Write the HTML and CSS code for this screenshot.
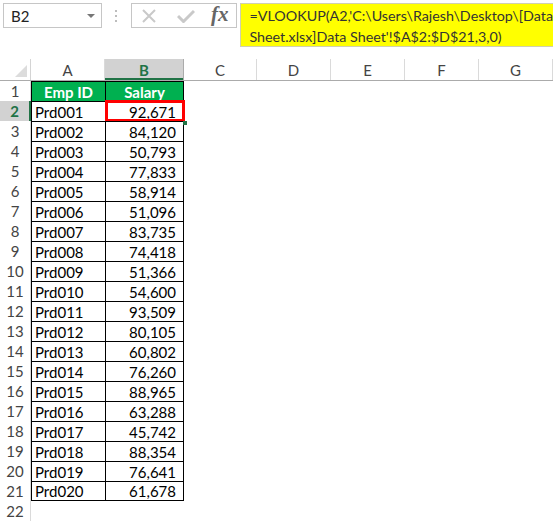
FILE: index.html
```html
<!DOCTYPE html>
<html>
<head>
<meta charset="utf-8">
<link rel="stylesheet" href="styles.css">
</head>
<body>
<div class="app">
  <div class="toolbar">
    <div class="namebox"><span class="ref">B2</span><span class="caret"></span></div>
    <div class="grip"><i></i><i></i><i></i></div>
    <div class="buttons">
      <svg class="icon-x" width="16" height="16" viewBox="0 0 16 16"><path d="M2 2 L14 14 M14 2 L2 14" stroke="#c9c9c9" stroke-width="2" fill="none"/></svg>
      <svg class="icon-check" width="18" height="14" viewBox="0 0 18 14"><path d="M1 7 L6.5 12.5 L17 2" stroke="#c9c9c9" stroke-width="3" fill="none"/></svg>
      <span class="fx">fx</span>
    </div>
    <div class="formula">=VLOOKUP(A2,'C:\Users\Rajesh\Desktop\[Data<br>Sheet.xlsx]Data Sheet'!$A$2:$D$21,3,0)</div>
  </div>
  <div class="sheet">
    <div class="row head">
      <div class="corner"></div>
      <div class="ch">A</div><div class="ch sel">B</div><div class="ch">C</div><div class="ch">D</div><div class="ch">E</div><div class="ch">F</div><div class="ch">G</div>
    </div>
    <div class="row"><div class="rh">1</div><div class="c t th">Emp ID</div><div class="c t th tb">Salary</div></div>
    <div class="row"><div class="rh sel">2</div><div class="c t">Prd001</div><div class="c t tb num active">92,671</div></div>
    <div class="row"><div class="rh">3</div><div class="c t">Prd002</div><div class="c t tb num">84,120</div></div>
    <div class="row"><div class="rh">4</div><div class="c t">Prd003</div><div class="c t tb num">50,793</div></div>
    <div class="row"><div class="rh">5</div><div class="c t">Prd004</div><div class="c t tb num">77,833</div></div>
    <div class="row"><div class="rh">6</div><div class="c t">Prd005</div><div class="c t tb num">58,914</div></div>
    <div class="row"><div class="rh">7</div><div class="c t">Prd006</div><div class="c t tb num">51,096</div></div>
    <div class="row"><div class="rh">8</div><div class="c t">Prd007</div><div class="c t tb num">83,735</div></div>
    <div class="row"><div class="rh">9</div><div class="c t">Prd008</div><div class="c t tb num">74,418</div></div>
    <div class="row"><div class="rh">10</div><div class="c t">Prd009</div><div class="c t tb num">51,366</div></div>
    <div class="row"><div class="rh">11</div><div class="c t">Prd010</div><div class="c t tb num">54,600</div></div>
    <div class="row"><div class="rh">12</div><div class="c t">Prd011</div><div class="c t tb num">93,509</div></div>
    <div class="row"><div class="rh">13</div><div class="c t">Prd012</div><div class="c t tb num">80,105</div></div>
    <div class="row"><div class="rh">14</div><div class="c t">Prd013</div><div class="c t tb num">60,802</div></div>
    <div class="row"><div class="rh">15</div><div class="c t">Prd014</div><div class="c t tb num">76,260</div></div>
    <div class="row"><div class="rh">16</div><div class="c t">Prd015</div><div class="c t tb num">88,965</div></div>
    <div class="row"><div class="rh">17</div><div class="c t">Prd016</div><div class="c t tb num">63,288</div></div>
    <div class="row"><div class="rh">18</div><div class="c t">Prd017</div><div class="c t tb num">45,742</div></div>
    <div class="row"><div class="rh">19</div><div class="c t">Prd018</div><div class="c t tb num">88,354</div></div>
    <div class="row"><div class="rh">20</div><div class="c t">Prd019</div><div class="c t tb num">76,641</div></div>
    <div class="row"><div class="rh">21</div><div class="c t last">Prd020</div><div class="c t tb num last">61,678</div></div>
    <div class="row"><div class="rh">22</div></div>
  </div>
</div>
</body>
</html>
```
FILE: styles.css
```css
html, body {
  margin: 0;
  padding: 0;
  background: #fff;
}
body {
  font-family: Lato, "Liberation Sans", sans-serif;
  color: #000;
  width: 553px;
  height: 521px;
  overflow: hidden;
}
.app {
  width: 553px;
  height: 521px;
  overflow: hidden;
}
.toolbar {
  display: flex;
  align-items: flex-start;
  height: 59px;
  padding-top: 3px;
  box-sizing: border-box;
}
.namebox {
  margin-left: 3px;
  width: 102px;
  height: 25px;
  box-sizing: border-box;
  border: 1px solid #c6c6c6;
  display: flex;
  align-items: center;
  justify-content: space-between;
  padding: 0 6px 0 7px;
}
.ref {
  font-size: 15px;
  color: #222;
}
.caret {
  width: 0;
  height: 0;
  border-left: 4px solid transparent;
  border-right: 4px solid transparent;
  border-top: 4px solid #777;
}
.grip {
  width: 30px;
  height: 25px;
  display: flex;
  flex-direction: column;
  align-items: center;
  justify-content: center;
  gap: 3px;
}
.grip i {
  display: block;
  width: 2px;
  height: 2px;
  background: #bdbdbd;
}
.buttons {
  width: 110px;
  height: 25px;
  box-sizing: border-box;
  border: 1px solid #c6c6c6;
  display: flex;
  align-items: center;
  padding-left: 9px;
}
.icon-x { margin-right: 20px; }
.icon-check { margin-right: 16px; }
.fx {
  font-family: "Liberation Serif", "DejaVu Serif", serif;
  font-style: italic;
  font-weight: bold;
  font-size: 21px;
  color: #666;
  line-height: 1;
  margin-top: -3px;
}
.formula {
  margin-left: 3px;
  flex: 1;
  height: 44px;
  box-sizing: border-box;
  background: #ffff00;
  border: 1px solid #d0d0b0;
  border-right: none;
  padding: 1px 0 0 8px;
  font-size: 14.3px;
  line-height: 21px;
  color: #333;
  white-space: nowrap;
}
.sheet {
  display: flex;
  flex-direction: column;
}
.row {
  display: grid;
  grid-template-columns: 31px 74px 79px 73px 74px 74px 74px 74px;
  height: 20px;
}
.row.head {
  height: 22px;
  border-bottom: 1px solid #ababab;
  box-sizing: border-box;
}
.corner {
  position: relative;
  border-right: 1px solid #d4d4d4;
  background: #fff;
}
.corner::after {
  content: "";
  position: absolute;
  right: 3px;
  bottom: 3px;
  width: 0;
  height: 0;
  border-left: 12px solid transparent;
  border-bottom: 12px solid #dcdcdc;
}
.ch {
  border-right: 1px solid #dadada;
  display: flex;
  align-items: center;
  justify-content: center;
  font-size: 15px;
  color: #444;
}
.ch.sel {
  background: #d2d2d2;
  color: #217346;
  font-weight: bold;
  border-right-color: #ababab;
  box-shadow: inset 0 -2px 0 #217346;
}
.rh {
  display: flex;
  align-items: center;
  justify-content: center;
  font-size: 15px;
  color: #444;
  border-right: 1px solid #dadada;
  box-sizing: border-box;
}
.rh.sel {
  background: #d2d2d2;
  color: #217346;
  font-weight: bold;
  border-right: 2px solid #217346;
}
.c {
  display: flex;
  align-items: center;
  font-size: 15px;
  padding-left: 3px;
  box-sizing: border-box;
  position: relative;
}
.c.t {
  border-left: 1px solid #000;
  border-top: 1px solid #000;
}
.c.tb {
  border-right: 1px solid #000;
}
.c.last {
  border-bottom: 1px solid #000;
}
.c.th {
  background: #00b050;
  color: #fff;
  font-weight: bold;
  justify-content: center;
  padding-left: 0;
}
.c.num {
  justify-content: flex-end;
  padding-right: 7px;
}
.c.active::after {
  content: "";
  position: absolute;
  left: -1px;
  top: -2px;
  right: -2px;
  bottom: -1px;
  border: 3px solid #ff0000;
}
.c.active::before {
  content: "";
  position: absolute;
  right: -4px;
  bottom: -4px;
  width: 4px;
  height: 4px;
  background: #217346;
  z-index: 2;
}
```
